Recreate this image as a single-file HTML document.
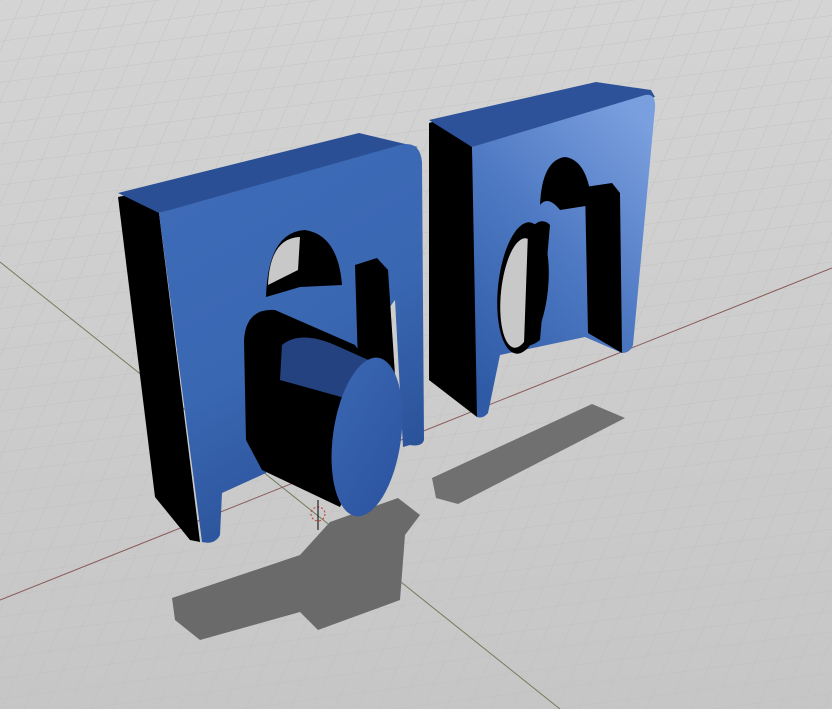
<!DOCTYPE html>
<html><head><meta charset="utf-8"><style>
html,body{margin:0;padding:0;background:#c9c9c9;overflow:hidden}
svg{display:block}
</style></head><body>
<svg width="832" height="709" viewBox="0 0 832 709" xmlns="http://www.w3.org/2000/svg">
<defs>
<linearGradient id="bg" x1="0" y1="0" x2="0" y2="1">
<stop offset="0" stop-color="#d4d4d4"/><stop offset="1" stop-color="#c6c6c6"/></linearGradient>
<linearGradient id="bl" x1="0" y1="0" x2="0.4" y2="1">
<stop offset="0" stop-color="#3f6cb8"/><stop offset="0.6" stop-color="#3a67b2"/><stop offset="1" stop-color="#2a5299"/></linearGradient>
<linearGradient id="br" x1="0.8" y1="0" x2="0.2" y2="1">
<stop offset="0" stop-color="#7a9fde"/><stop offset="0.5" stop-color="#4d78c2"/><stop offset="1" stop-color="#2f5aa6"/></linearGradient>
<linearGradient id="cyl" x1="0" y1="0" x2="1" y2="1">
<stop offset="0" stop-color="#3a66b2"/><stop offset="1" stop-color="#2c54a0"/></linearGradient>
<pattern id="grid" width="22" height="22" patternUnits="userSpaceOnUse" patternTransform="skewX(-30) rotate(-8)">
<path d="M0 0H22M0 0V22" stroke="#bdbdbd" stroke-width="1" fill="none"/></pattern>
</defs>
<rect width="832" height="709" fill="url(#bg)"/>
<rect width="832" height="709" fill="url(#grid)" opacity="0.8"/>
<line x1="0" y1="262" x2="560" y2="709" stroke="#6f7d5a" stroke-width="1"/>
<line x1="0" y1="600" x2="832" y2="268" stroke="#8a5a5a" stroke-width="1"/>
<!-- shadows -->
<polygon points="432,478 592,404 625,418 458,504 436,498" fill="#707070"/>
<polygon points="172,598 300,555 330,522 398,498 420,515 405,535 400,600 318,630 300,612 200,640 175,620" fill="#6a6a6a"/>
<!-- right object -->
<polygon points="429,123 445,118 472,147 488,413 477,417 429,380" fill="#000"/>
<polygon points="429,120 596,82 651,90 655,97 472,147" fill="#2d5299"/>
<path d="M472,147 L645,95 Q656,93 655,108 L633,345 Q630,353 622,353 L585,337 L500,355 L488,413 Q483,419 477,417 Z" fill="url(#br)"/>
<path d="M585,187 L612,183 L620,193 L622,353 L588,333 Z" fill="#000"/>
<path d="M540,205 Q542,160 565,157 Q588,160 592,205 L560,210 Q548,195 540,205 Z" fill="#000"/>
<ellipse cx="523" cy="288" rx="25" ry="66" transform="rotate(6 523 288)" fill="#000"/>
<ellipse cx="520" cy="293" rx="19" ry="55" transform="rotate(6 520 293)" fill="#c8c8c8"/>
<path d="M528,232 Q540,215 550,225 L540,340 Q530,348 524,344 Z" fill="#000"/>
<!-- left object -->
<polygon points="118,197 150,190 159,213 200,542 190,540 155,497" fill="#000"/>
<polygon points="118,193 359,133 418,147 159,213" fill="#2a4f95"/>
<path d="M159,213 L400,145 Q420,140 422,162 L424,440 Q422,447 410,445 L403,447 L395,300 L266,473 L222,493 L220,535 Q215,545 202,542 Z" fill="url(#bl)"/>
<path d="M266,297 Q268,232 305,230 Q338,235 342,285 L300,287 Z" fill="#000"/>
<path d="M268,285 Q270,238 300,237 L298,270 Z" fill="#c8c8c8"/>
<path d="M355,265 L377,258 L388,270 L398,420 L392,447 L360,430 Z" fill="#000"/>
<path d="M244,340 Q246,308 275,310 L355,345 L392,400 L340,507 L262,470 L246,440 Z" fill="#000"/>
<path d="M282,345 Q300,330 335,345 L395,372 L352,400 L280,380 Z" fill="#23427f"/>
<ellipse cx="367" cy="437" rx="34" ry="80" transform="rotate(8 367 437)" fill="url(#cyl)"/>
<!-- cursor -->
<circle cx="318" cy="514" r="7" fill="none" stroke="#c33" stroke-width="1" stroke-dasharray="2 2"/>
<line x1="318" y1="500" x2="318" y2="530" stroke="#000" stroke-width="1"/>
</svg>
</body></html>
